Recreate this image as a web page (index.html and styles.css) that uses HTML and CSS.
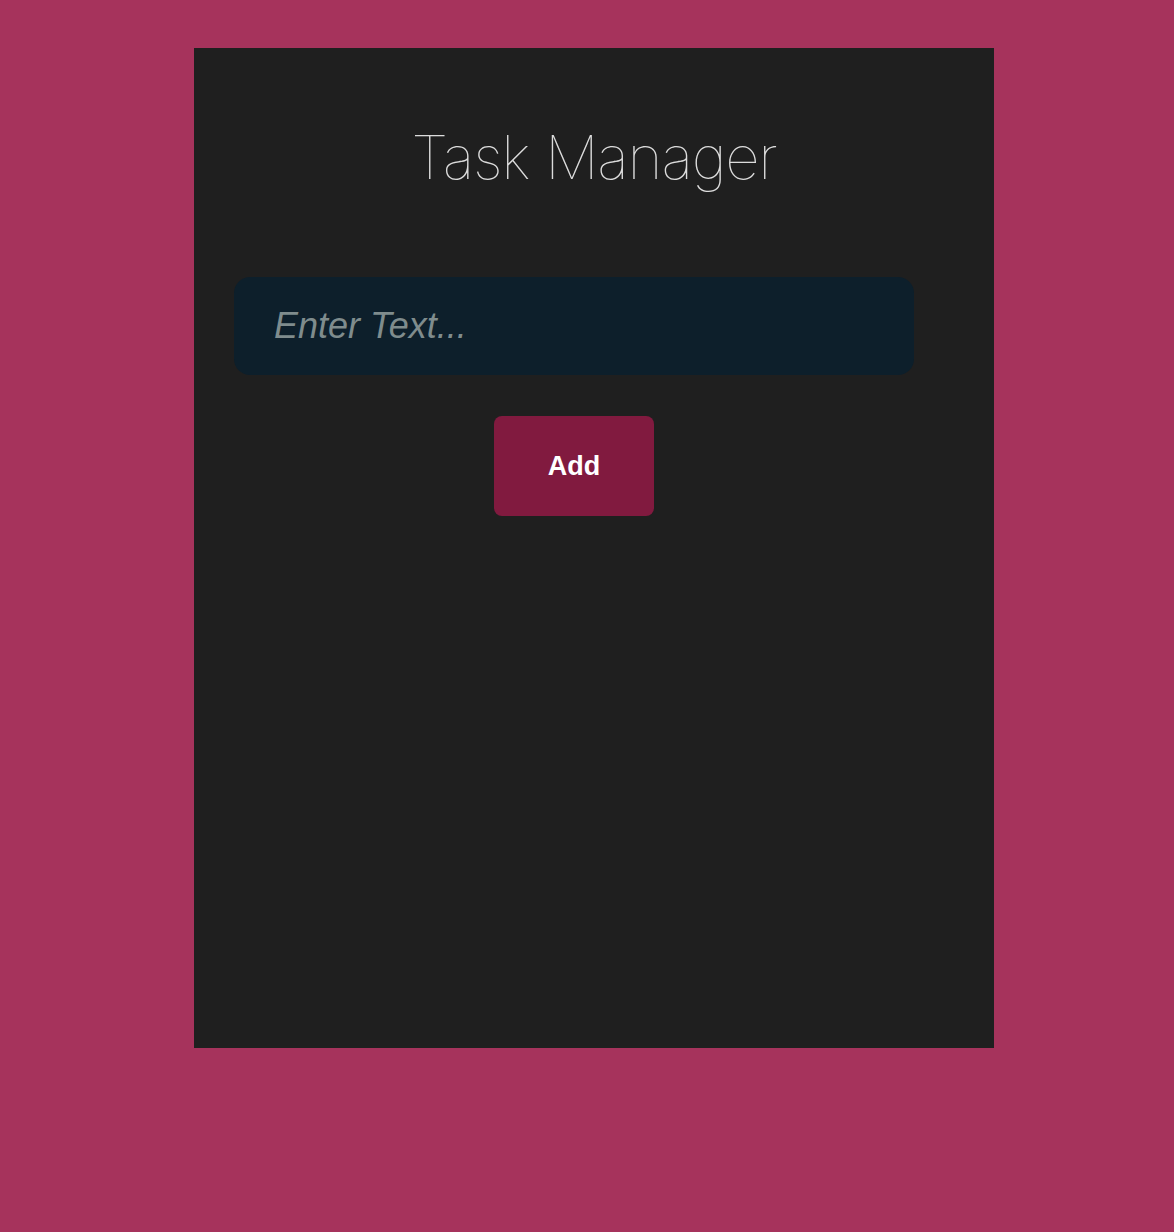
FILE: index.html
```html
<!DOCTYPE html>
<html>
<head>
<meta charset="utf-8">
<link rel="stylesheet" href="styles.css">
</head>
<body>
<main class="card">
  <h1 class="title">Task Manager</h1>
  <form class="form">
    <input class="field" type="text" placeholder="Enter Text...">
    <button class="add" type="button">Add</button>
  </form>
</main>
</body>
</html>
```
FILE: styles.css
```css
html, body {
  margin: 0;
  padding: 0;
}
body {
  background: #a6335c;
  min-height: 1232px;
  padding-top: 48px;
  box-sizing: border-box;
}
.card {
  width: 800px;
  height: 1000px;
  margin-left: 194px;
  background: #1f1f1f;
  box-sizing: border-box;
  padding-top: 69px;
}
.title {
  margin: 0;
  text-align: center;
  font-family: Inter, "Noto Sans", sans-serif;
  font-weight: 100;
  font-size: 60px;
  line-height: 80px;
  letter-spacing: -1.25px;
  color: #dcdcdc;
}
.form {
  margin-top: 80px;
  margin-left: 40px;
  width: 680px;
  display: flex;
  flex-direction: column;
  align-items: center;
  gap: 41px;
}
.field {
  width: 680px;
  height: 98px;
  box-sizing: border-box;
  border: none;
  border-radius: 16px;
  background: #0d1f2b;
  padding: 0 40px;
  font-family: "Liberation Sans", Arial, sans-serif;
  font-size: 36px;
  font-style: italic;
  color: #cfd8dc;
  outline: none;
}
.field::placeholder {
  color: #7f8c8d;
  font-style: italic;
}
.add {
  width: 160px;
  height: 100px;
  border: none;
  border-radius: 8px;
  background: #811a3f;
  color: #ffffff;
  font-family: "Liberation Sans", Arial, sans-serif;
  font-weight: bold;
  font-size: 27px;
  padding-top: 2px;
  cursor: pointer;
}
```
